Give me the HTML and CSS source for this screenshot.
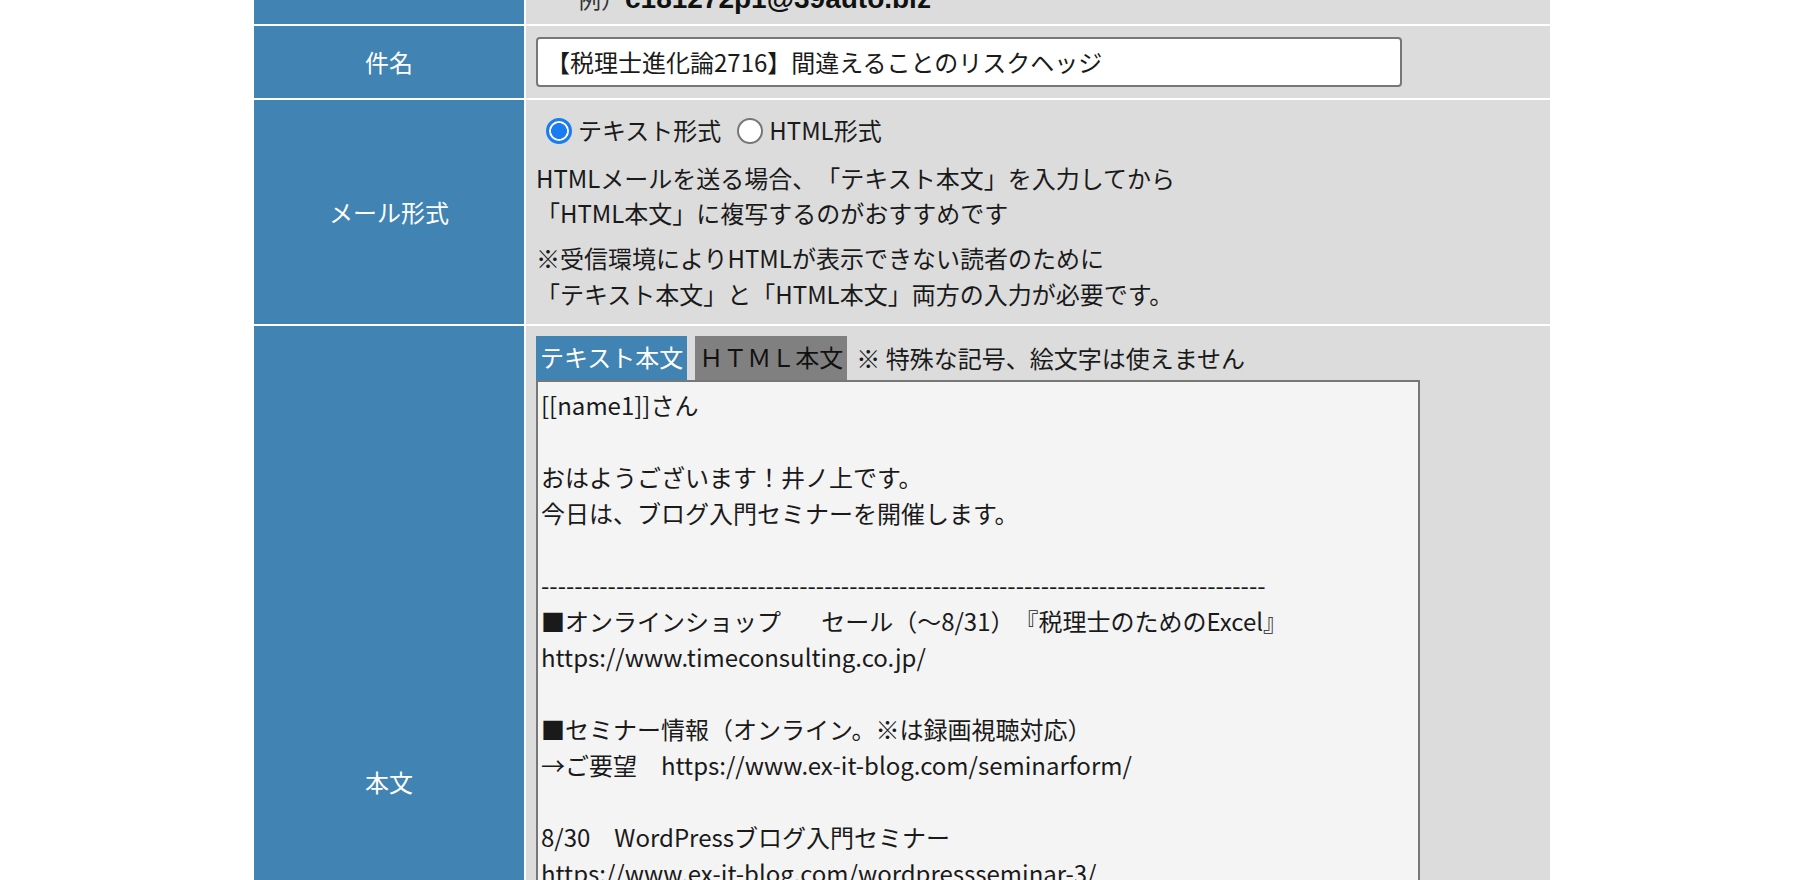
FILE: index.html
```html
<!DOCTYPE html>
<html lang="ja">
<head>
    <meta charset="UTF-8">
    <meta name="viewport" content="width=device-width, initial-scale=1.0">
    <title>メール作成</title>
    <link rel="stylesheet" href="styles.css">
</head>
<body>
    <div class="mail-form">
        <div class="label label-top"></div>
        <div class="value value-top">
            <p class="example">例）<b>c181272p1@39auto.biz</b></p>
        </div>

        <div class="label">件名</div>
        <div class="value value-subject">
            <input type="text" class="subject-input" name="subject" value="【税理士進化論2716】間違えることのリスクヘッジ">
        </div>

        <div class="label">メール形式</div>
        <div class="value value-format">
            <div class="radio-row">
                <label class="radio-label"><input type="radio" name="format" value="text" checked>テキスト形式</label>
                <label class="radio-label radio-html"><input type="radio" name="format" value="html">HTML形式</label>
            </div>
            <p class="note">HTMLメールを送る場合、「テキスト本文」を入力してから<br>「HTML本文」に複写するのがおすすめです</p>
            <p class="note">※受信環境によりHTMLが表示できない読者のために<br>「テキスト本文」と「HTML本文」両方の入力が必要です。</p>
        </div>

        <div class="label">本文</div>
        <div class="value value-body">
            <div class="tabs">
                <span class="tab tab-active">テキスト本文</span>
                <span class="tab tab-html">ＨＴＭＬ本文</span>
                <span class="tab-note">※ 特殊な記号、絵文字は使えません</span>
            </div>
            <textarea class="body-text" name="body">[[name1]]さん

おはようございます！井ノ上です。
今日は、ブログ入門セミナーを開催します。

---------------------------------------------------------------------------------------
■オンラインショップ　   セール（〜8/31）『税理士のためのExcel』
https://www.timeconsulting.co.jp/

■セミナー情報（オンライン。※は録画視聴対応）
→ご要望　https://www.ex-it-blog.com/seminarform/

8/30　WordPressブログ入門セミナー
https://www.ex-it-blog.com/wordpressseminar-3/
</textarea>
        </div>
    </div>
</body>
</html>
```

FILE: styles.css
```css
body {
    margin: 0;
    font-family: "Noto Sans CJK JP", sans-serif;
    font-size: 24px;
    color: #1a1a1a;
    background-color: #fff;
    text-spacing-trim: space-all;
    overflow: hidden;
}

.mail-form {
    display: grid;
    grid-template-columns: 270px 1024px;
    gap: 2px;
    margin: -26px 0 0 254px;
}

.label {
    background-color: #4183b2;
    color: #fff;
    display: flex;
    align-items: center;
    justify-content: center;
    padding-bottom: 2px;
}

.value {
    background-color: #dcdcdc;
    box-sizing: border-box;
    padding: 10px;
}

.value-top {
    height: 50px;
    display: flex;
    align-items: flex-end;
    padding: 0 0 11px 51px;
}

.example {
    margin: 0;
    line-height: 28px;
    color: #333;
}

.example b {
    font-family: "Liberation Sans", Arial, sans-serif;
    font-size: 28px;
    color: #111;
}

.value-subject {
    height: 72px;
    padding: 11px 10px;
}

.subject-input {
    width: 866px;
    height: 50px;
    box-sizing: border-box;
    border: 2px solid #777;
    border-radius: 4px;
    padding: 0 8px 2px;
    font-family: "Noto Sans CJK JP", sans-serif;
    font-size: 24px;
    color: #1a1a1a;
    background-color: #fff;
    text-spacing-trim: space-all;
    margin: 0;
}

.value-format {
    height: 224px;
    padding: 11px 10px 12px;
}

.radio-row {
    display: flex;
    align-items: center;
    height: 36px;
    margin-bottom: 13px;
}

.radio-label {
    display: flex;
    align-items: center;
    gap: 6px;
    margin-left: 10px;
}

.radio-html {
    margin-left: 16px;
}

.radio-label input {
    appearance: none;
    -webkit-appearance: none;
    width: 26px;
    height: 26px;
    margin: 4px 0 0;
    border-radius: 50%;
    border: 2px solid #767676;
    background-color: #fff;
    box-sizing: border-box;
}

.radio-label input:checked {
    border: 3px solid #1a7cf0;
    background: radial-gradient(circle, #1a7cf0 0 54%, #fff 58%);
}

.note {
    margin: 0;
    line-height: 35px;
}

.note + .note {
    margin-top: 10px;
    line-height: 36px;
}

.tabs {
    display: flex;
    align-items: center;
    gap: 8px;
    height: 44px;
}

.tab {
    height: 44px;
    line-height: 42px;
    padding: 0 4px;
}

.tab-active {
    background-color: #4183b2;
    color: #fff;
}

.tab-html {
    background-color: #808080;
    color: #111;
}

.tab-note {
    margin-left: 1px;
    margin-bottom: 2px;
}

.body-text {
    display: block;
    width: 884px;
    height: 848px;
    box-sizing: border-box;
    margin: 0;
    border: 2px solid #777;
    padding: 5px 3px;
    background-color: #f4f4f4;
    font-family: "Noto Sans CJK JP", sans-serif;
    font-size: 24px;
    line-height: 36px;
    color: #1a1a1a;
    text-spacing-trim: space-all;
    resize: none;
    overflow: hidden;
}
```
